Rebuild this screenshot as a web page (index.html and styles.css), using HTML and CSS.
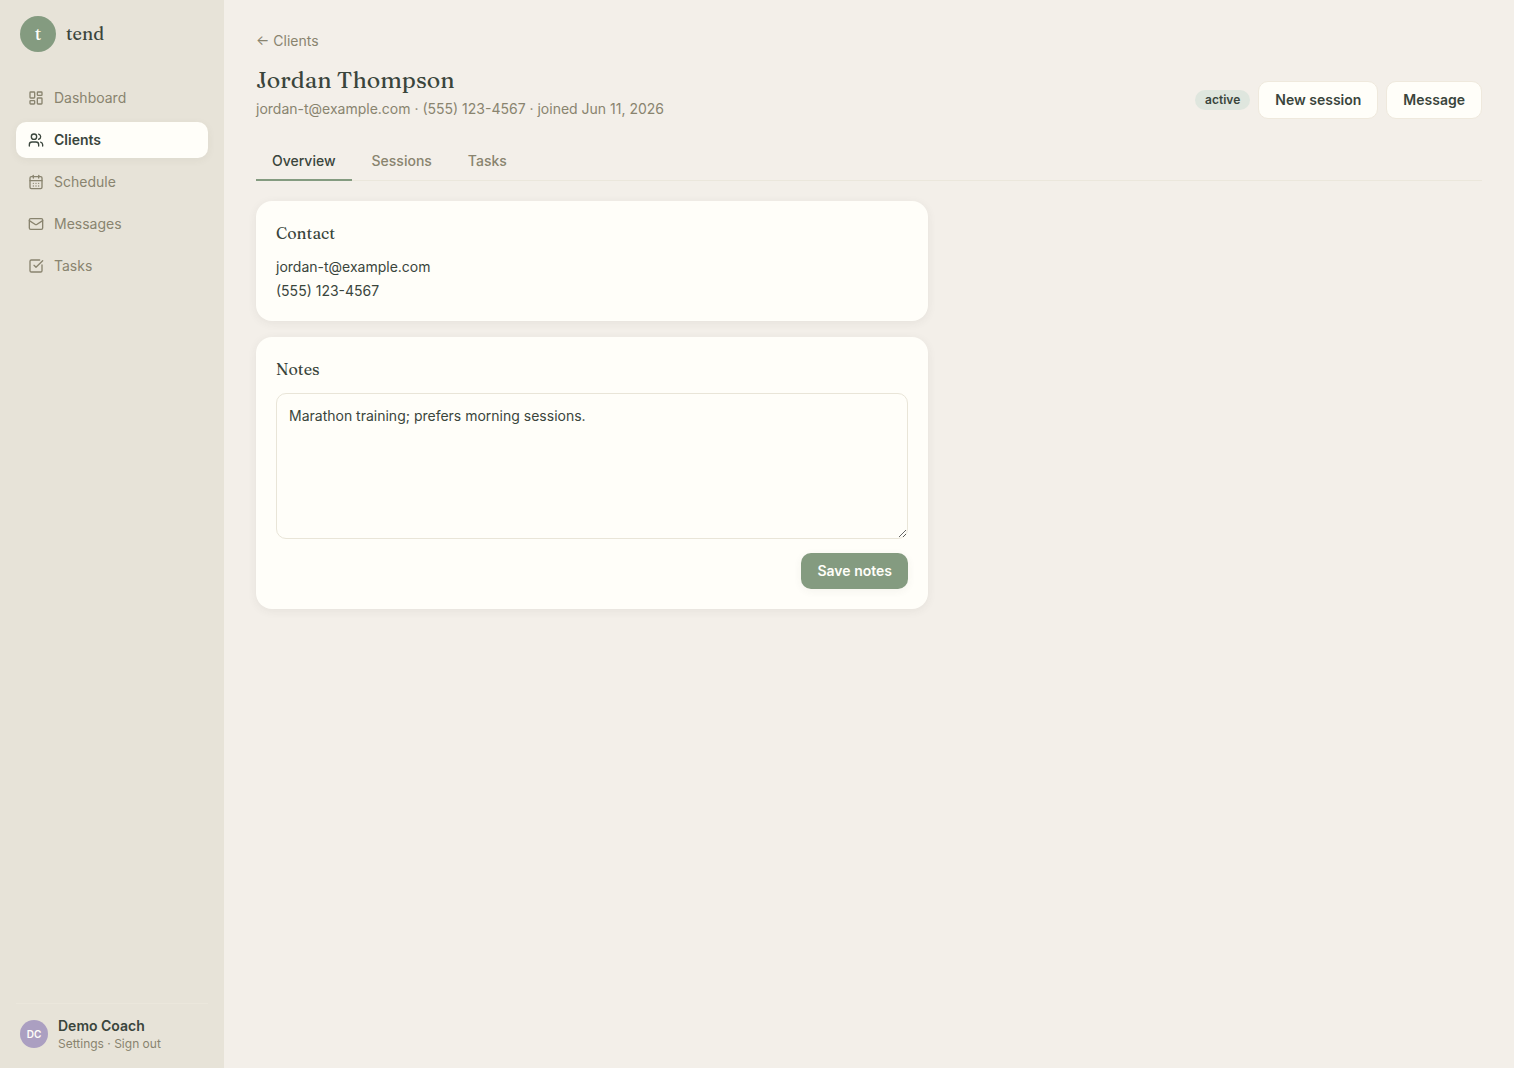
FILE: index.html
```html
<!DOCTYPE html>
<html lang="en">
<head>
<meta charset="utf-8">
<meta name="viewport" content="width=device-width, initial-scale=1">
<title>Jordan Thompson · tend</title>
<link rel="stylesheet" href="styles.css">
</head>
<body>
<div class="app">
  <aside class="sidebar">
    <div class="brand"><span class="brand-mark">t</span><span class="brand-name">tend</span></div>
    <nav class="nav">
      <a class="nav-item" href="#dashboard"><svg class="icon" viewBox="0 0 24 24"><rect width="7" height="9" x="3" y="3" rx="1"/><rect width="7" height="5" x="14" y="3" rx="1"/><rect width="7" height="9" x="14" y="12" rx="1"/><rect width="7" height="5" x="3" y="16" rx="1"/></svg>Dashboard</a>
      <a class="nav-item nav-item-active" href="#clients" aria-current="page"><svg class="icon" viewBox="0 0 24 24"><path d="M16 21v-2a4 4 0 0 0-4-4H6a4 4 0 0 0-4 4v2"/><circle cx="9" cy="7" r="4"/><path d="M22 21v-2a4 4 0 0 0-3-3.87"/><path d="M16 3.13a4 4 0 0 1 0 7.75"/></svg>Clients</a>
      <a class="nav-item" href="#schedule"><svg class="icon" viewBox="0 0 24 24"><path d="M8 2v4"/><path d="M16 2v4"/><rect width="18" height="18" x="3" y="4" rx="2"/><path d="M3 10h18"/><path d="M8 14h.01"/><path d="M12 14h.01"/><path d="M16 14h.01"/><path d="M8 18h.01"/><path d="M12 18h.01"/><path d="M16 18h.01"/></svg>Schedule</a>
      <a class="nav-item" href="#messages"><svg class="icon" viewBox="0 0 24 24"><rect width="20" height="16" x="2" y="4" rx="2"/><path d="m22 7-8.97 5.7a1.94 1.94 0 0 1-2.06 0L2 7"/></svg>Messages</a>
      <a class="nav-item" href="#tasks"><svg class="icon" viewBox="0 0 24 24"><path d="M21 10.5V19a2 2 0 0 1-2 2H5a2 2 0 0 1-2-2V5a2 2 0 0 1 2-2h12.5"/><path d="m9 11 3 3L22 4"/></svg>Tasks</a>
    </nav>
    <div class="account">
      <span class="avatar">DC</span>
      <div>
        <div class="account-name">Demo Coach</div>
        <div class="account-links"><a href="#settings">Settings</a> · <a href="#signout">Sign out</a></div>
      </div>
    </div>
  </aside>
  <main class="main">
    <a class="back" href="#clients">← Clients</a>
    <header class="header">
      <div>
        <h1 class="title">Jordan Thompson</h1>
        <p class="subtitle">jordan-t@example.com · (555) 123-4567 · joined Jun 11, 2026</p>
      </div>
      <div class="actions">
        <span class="badge">active</span>
        <button class="button" type="button">New session</button>
        <button class="button" type="button">Message</button>
      </div>
    </header>
    <div class="tabs" role="tablist">
      <button class="tab tab-active" type="button" role="tab" aria-selected="true">Overview</button>
      <button class="tab" type="button" role="tab" aria-selected="false">Sessions</button>
      <button class="tab" type="button" role="tab" aria-selected="false">Tasks</button>
    </div>
    <div class="cards">
      <section class="card">
        <h2 class="card-title">Contact</h2>
        <div class="lines">
          <p>jordan-t@example.com</p>
          <p>(555) 123-4567</p>
        </div>
      </section>
      <section class="card">
        <h2 class="card-title"><label for="notes">Notes</label></h2>
        <textarea class="notes" id="notes" rows="6">Marathon training; prefers morning sessions.</textarea>
        <div class="card-actions"><button class="button button-primary" type="button">Save notes</button></div>
      </section>
    </div>
  </main>
</div>
</body>
</html>
```
FILE: styles.css
```css
:root {
  --ink: #3a453c;
  --muted: #89846f;
  --paper: #fffef9;
  --line: #ebe7dc;
  --sage: #849b80;
  --serif: Fraunces, "Liberation Serif", serif;
}

* { box-sizing: border-box; }

body {
  margin: 0;
  background: #f3efe9;
  color: var(--ink);
  font: 14px/20px Inter, sans-serif;
}

a { color: inherit; text-decoration: none; }
h1, h2, p { margin: 0; }
button, textarea { font: inherit; color: inherit; }

.app { display: flex; min-height: 100vh; }

.sidebar {
  display: flex;
  flex-direction: column;
  flex: none;
  width: 224px;
  padding: 16px;
  background: #e7e3d8;
}

.brand { display: flex; align-items: center; gap: 10px; padding: 0 4px; margin-bottom: 28px; }

.brand-mark {
  display: grid;
  place-items: center;
  width: 36px;
  height: 36px;
  border-radius: 50%;
  background: var(--sage);
  color: var(--paper);
  font: 500 18px/24px var(--serif);
}

.brand-name { font: 500 18px/24px var(--serif); }

.nav { display: flex; flex-direction: column; gap: 6px; }

.nav-item {
  display: flex;
  align-items: center;
  gap: 10px;
  padding: 8px 12px;
  border-radius: 10px;
  color: var(--muted);
}

.nav-item-active {
  background: var(--paper);
  color: var(--ink);
  font-weight: 600;
  box-shadow: 0 2px 8px rgba(60, 60, 50, 0.06);
}

.icon {
  width: 16px;
  height: 16px;
  fill: none;
  stroke: currentColor;
  stroke-width: 2;
  stroke-linecap: round;
  stroke-linejoin: round;
}

.account {
  display: flex;
  align-items: center;
  gap: 10px;
  margin-top: auto;
  padding: 12px 4px 0;
  border-top: 1px solid var(--line);
}

.avatar {
  display: grid;
  place-items: center;
  width: 28px;
  height: 28px;
  border-radius: 50%;
  background: #ab9fc1;
  color: var(--paper);
  font-size: 10px;
  font-weight: 600;
}

.account-name { font-weight: 600; }
.account-links { line-height: 16px; font-size: 12px; color: var(--muted); }

.main { flex: 1; min-width: 0; padding: 32px; }

.back { display: block; line-height: 18px; color: var(--muted); }

.header {
  display: flex;
  flex-wrap: wrap;
  align-items: flex-end;
  justify-content: space-between;
  gap: 16px;
  margin: 14px 0 24px;
}

.title { font: 500 23px/32px var(--serif); }
.subtitle { margin-top: 3px; color: var(--muted); }

.actions { display: flex; align-items: center; gap: 8px; }

.badge {
  padding: 0 10px;
  border-radius: 10px;
  background: #dfe6de;
  font-size: 12px;
  font-weight: 600;
}

.button {
  padding: 8px 16px;
  border: 1px solid #efe9dd;
  border-radius: 10px;
  background: var(--paper);
  font-weight: 600;
}

.button-primary {
  border: 0;
  background: var(--sage);
  color: var(--paper);
  box-shadow: 0 2px 8px rgba(60, 60, 50, 0.06);
}

.tabs { display: flex; gap: 4px; margin-bottom: 20px; box-shadow: inset 0 -1px var(--line); }

.tab {
  padding: 8px 16px;
  border: 0;
  border-bottom: 2px solid transparent;
  background: none;
  color: var(--muted);
  font-weight: 500;
}

.tab-active { border-bottom-color: var(--sage); color: var(--ink); }

.cards { display: grid; gap: 16px; max-width: 672px; }

.card {
  padding: 20px;
  border-radius: 16px;
  background: var(--paper);
  box-shadow: 0 2px 10px rgba(60, 60, 50, 0.07);
}

.card-title { margin-bottom: 12px; font: 500 16px/24px var(--serif); }
.lines { display: grid; gap: 4px; }

.notes {
  display: block;
  width: 100%;
  padding: 12px;
  border: 1px solid #e9e5d8;
  border-radius: 10px;
  background: var(--paper);
  resize: vertical;
}

.card-actions { display: flex; justify-content: flex-end; margin-top: 14px; }
```
